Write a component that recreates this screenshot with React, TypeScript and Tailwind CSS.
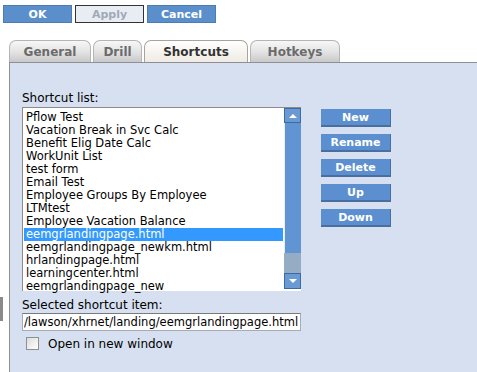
import { useState } from "react";

const items = [
  "Pflow Test",
  "Vacation Break in Svc Calc",
  "Benefit Elig Date Calc",
  "WorkUnit List",
  "test form",
  "Email Test",
  "Employee Groups By Employee",
  "LTMtest",
  "Employee Vacation Balance",
  "eemgrlandingpage.html",
  "eemgrlandingpage_newkm.html",
  "hrlandingpage.html",
  "learningcenter.html",
  "eemgrlandingpage_new",
];

const tabs = ["General", "Drill", "Shortcuts", "Hotkeys"];

function TopButton({ label, disabled }: { label: string; disabled?: boolean }) {
  return (
    <button
      className={
        disabled
          ? "w-[69px] h-[18px] border border-[#333] bg-[#e8edf4] text-[#a3a9b3] text-[11px] font-bold leading-none"
          : "w-[69px] h-[18px] border border-[#4d7bb3] bg-[#5b8fcb] text-white text-[11px] font-bold leading-none"
      }
    >
      {label}
    </button>
  );
}

function SideButton({ label }: { label: string }) {
  return (
    <button className="w-[70px] h-[18px] bg-[#5c8fcf] border-b-2 border-r border-[#4a6f9e] text-white text-[11px] font-bold leading-none">
      {label}
    </button>
  );
}

export default function App() {
  const [selected, setSelected] = useState(9);

  return (
    <div className="w-[477px] h-[372px] bg-white overflow-hidden relative font-['DejaVu_Sans',Verdana,sans-serif] text-[11px] text-black">
      {/* stray control edge on the left */}
      <div className="absolute left-0 top-[297px] w-[3px] h-[24px] bg-[#8a8a8a]" />

      {/* Dialog buttons */}
      <div className="flex gap-[3px] pl-[3px] pt-[5px]">
        <TopButton label="OK" />
        <TopButton label="Apply" disabled />
        <TopButton label="Cancel" />
      </div>

      {/* Tabs */}
      <div className="flex items-end gap-[2px] pl-[9px] mt-[17px] h-[22px]">
        {tabs.map((t) => {
          const active = t === "Shortcuts";
          return (
            <div
              key={t}
              className={
                active
                  ? "h-[22px] w-[104px] rounded-t-[7px] border border-b-0 border-[#a9a49a] bg-gradient-to-b from-white to-[#efebe3] text-[#333] text-[12px] font-bold flex items-center justify-center"
                  : "h-[22px] rounded-t-[7px] border border-b-0 border-[#b5b5b5] bg-gradient-to-b from-[#f7f7f7] via-[#e4e4e4] to-[#c9c9c9] text-[#6b6b6b] text-[12px] font-bold flex items-center justify-center " +
                    (t === "General" ? "w-[82px]" : t === "Drill" ? "w-[49px]" : "w-[90px]")
              }
            >
              {t}
            </div>
          );
        })}
      </div>

      {/* Panel */}
      <div className="ml-[9px] h-[310px] border-l border-t border-[#8e9096] bg-[#d6e0f0] pl-[12px] pt-[28px]">
        <div className="flex">
          <div className="w-[279px]">
            <div className="text-[12px] leading-[14px] text-black">Shortcut list:</div>
            <div className="mt-[2px] h-[184px] w-[279px] bg-white border-t border-l border-[#8b8b8b] flex">
              <div className="flex-1 pl-[1px] pt-[3px]">
                {items.map((it, i) => (
                  <div
                    key={it}
                    onClick={() => setSelected(i)}
                    className={
                      "h-[13px] leading-[13px] pl-[2px] whitespace-nowrap text-[11.5px] " +
                      (i === selected ? "bg-[#3399ff] text-white" : "text-black")
                    }
                  >
                    {it}
                  </div>
                ))}
              </div>
              <div className="w-[18px] h-full flex flex-col border-l border-white">
                <div className="h-[15px] bg-[#6a9ad4] border border-[#3f6aa0] flex items-center justify-center">
                  <div className="w-0 h-0 border-l-[4px] border-r-[4px] border-b-[4px] border-l-transparent border-r-transparent border-b-white" />
                </div>
                <div className="h-[130px] bg-[#6194d3] border-l border-[#e8eef6]" />
                <div className="h-[20px] bg-[#94adc5]" />
                <div className="h-[16px] bg-[#6a9ad4] border border-[#3f6aa0] flex items-center justify-center">
                  <div className="w-0 h-0 border-l-[4px] border-r-[4px] border-t-[4px] border-l-transparent border-r-transparent border-t-white" />
                </div>
              </div>
            </div>
            <div className="mt-[7px] text-[12px] leading-[14px]">Selected shortcut item:</div>
            <input
              readOnly
              value="/lawson/xhrnet/landing/eemgrlandingpage.html"
              className="mt-[1px] w-[279px] h-[18px] bg-white border border-[#a5acb5] border-t-[#7a7a7a] px-[1px] text-[11.5px] leading-[16px] outline-none"
            />
            <label className="flex items-center mt-[5px] pl-[4px] gap-[9px]">
              <span className="w-[13px] h-[13px] border border-[#8f8f8f] bg-gradient-to-br from-[#dcdcdc] to-white" />
              <span className="text-[12px] leading-[14px]">Open in new window</span>
            </label>
          </div>

          <div className="ml-[20px] mt-[18px] flex flex-col gap-[7px]">
            <SideButton label="New" />
            <SideButton label="Rename" />
            <SideButton label="Delete" />
            <SideButton label="Up" />
            <SideButton label="Down" />
          </div>
        </div>
      </div>
    </div>
  );
}
